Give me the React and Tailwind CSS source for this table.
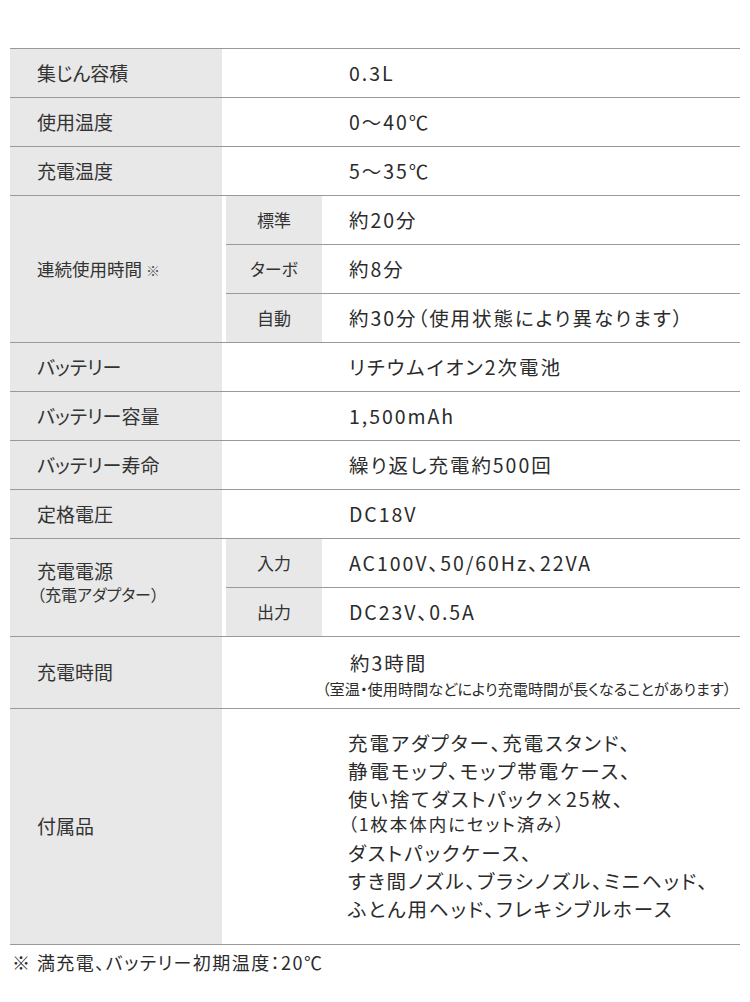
const font = "font-['Noto_Sans_CJK_JP','Noto_Sans',sans-serif] [font-feature-settings:'palt']";

function Label({ children }) {
  return (
    <div className="w-[212px] shrink-0 bg-[#e8e8e8] flex flex-col justify-center pl-[27px] text-[19px] text-[#333]">
      {children}
    </div>
  );
}

function Row({ label, value }) {
  return (
    <div className="flex border-b border-[#999]">
      <Label>{label}</Label>
      <div className="flex-1 h-[48px] flex items-center pl-[127px] text-[19.5px] tracking-[0.1em] text-[#2b2b2b] whitespace-nowrap">
        {value}
      </div>
    </div>
  );
}

function SubRow({ label, items }) {
  return (
    <div className="flex border-b border-[#999]">
      <Label>{label}</Label>
      <div className="flex-1 ml-[4px] flex flex-col">
        {items.map((it, i) => (
          <div
            key={it.k}
            className={i < items.length - 1 ? 'flex h-[49px] border-b border-[#999]' : 'flex h-[48px]'}
          >
            <div className="w-[96px] shrink-0 bg-[#e8e8e8] flex items-center justify-center text-[17px] text-[#333]">
              {it.k}
            </div>
            <div className="flex-1 flex items-center pl-[27px] text-[19.5px] tracking-[0.1em] text-[#2b2b2b] whitespace-nowrap">
              {it.v}
            </div>
          </div>
        ))}
      </div>
    </div>
  );
}

export default function App() {
  return (
    <div className={`bg-white w-[750px] h-[1002px] pt-[48px] px-[10px] ${font}`}>
      <div className="border-t border-[#999]">
        <Row label="集じん容積" value="0.3L" />
        <Row label="使用温度" value="0〜40℃" />
        <Row label="充電温度" value="5〜35℃" />
        <SubRow
          label={
            <span className="text-[17.5px]">
              連続使用時間 <span className="text-[14px] text-[#555]">※</span>
            </span>
          }
          items={[
            { k: '標準', v: '約20分' },
            { k: 'ターボ', v: '約8分' },
            { k: '自動', v: '約30分（使用状態により異なります）' },
          ]}
        />
        <Row label="バッテリー" value="リチウムイオン2次電池" />
        <Row label="バッテリー容量" value="1,500mAh" />
        <Row label="バッテリー寿命" value="繰り返し充電約500回" />
        <Row label="定格電圧" value="DC18V" />
        <SubRow
          label={
            <div className="-mt-[12px]">
              <div className="leading-[24px]">充電電源</div>
              <div className="text-[16px] leading-[22px]">（充電アダプター）</div>
            </div>
          }
          items={[
            { k: '入力', v: 'AC100V、50/60Hz、22VA' },
            { k: '出力', v: 'DC23V、0.5A' },
          ]}
        />
        <div className="flex border-b border-[#999]">
          <Label>充電時間</Label>
          <div className="flex-1 pt-[12px] pb-[10px] text-[#2b2b2b] whitespace-nowrap">
            <div className="pl-[128px] text-[19.5px] leading-[28px] tracking-[0.1em]">約3時間</div>
            <div className="mt-[1px] pl-[100px] text-[15.2px] leading-[20px]">
              （室温・使用時間などにより充電時間が長くなることがあります）
            </div>
          </div>
        </div>
        <div className="flex border-b border-[#999]">
          <Label>付属品</Label>
          <div className="flex-1 pt-[20px] pb-[21px] pl-[126px] text-[19.5px] leading-[28px] tracking-[0.1em] text-[#2b2b2b] whitespace-nowrap">
            <div>充電アダプター、充電スタンド、</div>
            <div>静電モップ、モップ帯電ケース、</div>
            <div>使い捨てダストパック×25枚、</div>
            <div className="text-[17.5px] leading-[22px]">（1枚本体内にセット済み）</div>
            <div className="mt-[4px]">ダストパックケース、</div>
            <div>すき間ノズル、ブラシノズル、ミニヘッド、</div>
            <div>ふとん用ヘッド、フレキシブルホース</div>
          </div>
        </div>
      </div>
      <div className="pt-[6px] pl-[2px] text-[18px] leading-[22px] tracking-[0.08em] text-[#2b2b2b]">
        ※ 満充電、バッテリー初期温度：20℃
      </div>
    </div>
  );
}
